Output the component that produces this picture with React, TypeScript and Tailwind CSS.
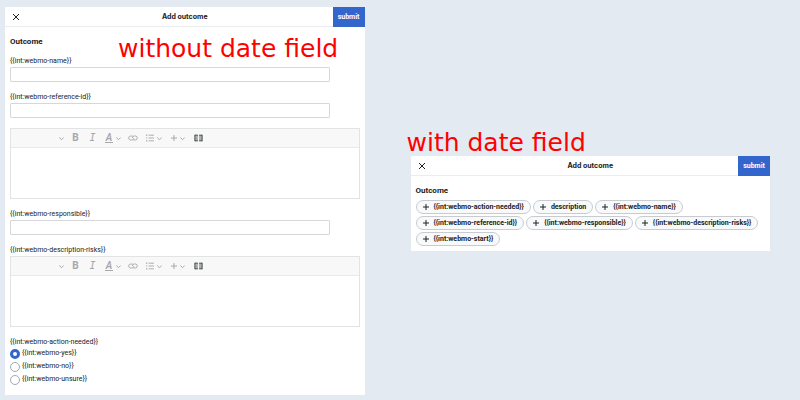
import React from "react";

function Chevron() {
  return (
    <svg viewBox="0 0 5 5" className="h-[5px] w-[5px] shrink-0" fill="none" stroke="currentColor" strokeWidth="1">
      <path d="M0.3 1.5 2.5 3.7 4.7 1.5" />
    </svg>
  );
}

function Plus() {
  return (
    <svg viewBox="0 0 8 8" className="h-2 w-2 shrink-0" fill="none" stroke="currentColor" strokeWidth="1">
      <path d="M4 1v6M1 4h6" />
    </svg>
  );
}

function LinkIcon() {
  return (
    <svg viewBox="0 0 10 8" className="h-2 w-[10px]" fill="none" stroke="currentColor" strokeWidth="0.9">
      <path d="M4.6 2H2.7a2 2 0 0 0 0 4h1.1a2 2 0 0 0 2-2" />
      <path d="M5.4 6h1.9a2 2 0 0 0 0-4H6.2a2 2 0 0 0-2 2" />
    </svg>
  );
}

function ListIcon() {
  return (
    <svg viewBox="0 0 8 8" className="h-2 w-2" fill="none" stroke="currentColor" strokeWidth="0.9">
      <path d="M2.6 1.2H8M2.6 4H8M2.6 6.8H8" />
      <path d="M0 1.2h1.3M0 4h1.3M0 6.8h1.3" strokeWidth="1.2" />
    </svg>
  );
}

function TemplateIcon() {
  return (
    <svg viewBox="0 0 9 8" className="h-2 w-[9px]" fill="none" stroke="currentColor">
      <path d="M1 0.8v6.4M8 0.8v6.4" strokeWidth="1.2" />
      <path d="M3 0.8v6.4M6 0.8v6.4" strokeWidth="0.8" />
      <path d="M1 1.2h2.9M5.1 1.2H8M1 6.8h2.9M5.1 6.8H8" strokeWidth="0.8" />
    </svg>
  );
}

function Panel({ children }: { children: React.ReactNode }) {
  return (
    <section className="bg-white text-[#202122]">
      <header className="flex h-5 items-stretch border-b border-[#eaecf0]">
        <div className="flex w-8 items-center pl-[7px]">
          <button type="button" aria-label="Close">
            <svg viewBox="0 0 8 8" className="h-2 w-2" fill="none" stroke="currentColor" strokeWidth="1">
              <path d="M1 1l6 6M7 1L1 7" />
            </svg>
          </button>
        </div>
        <h2 className="flex-1 self-center text-center font-['Inter',sans-serif] text-[7px] leading-[11px] font-bold">Add outcome</h2>
        <button type="submit" className="-mb-px w-8 bg-[#3366cc] text-[7px] leading-[11px] font-bold text-white">
          submit
        </button>
      </header>
      <div className="px-[5px] pt-2">
        <h3 className="text-[8px] leading-[13px] font-bold">Outcome</h3>
        {children}
      </div>
    </section>
  );
}

function TextField({ id, label }: { id: string; label: string }) {
  return (
    <div>
      <label htmlFor={id} className="block">{label}</label>
      <input id={id} type="text" className="block h-[15px] w-[320px] max-w-full rounded-[1px] border border-[#d5d7da] bg-white px-1" />
    </div>
  );
}

function Editor({ id, name }: { id: string; name: string }) {
  return (
    <div className="border border-[#e2e3e5]">
      <div role="toolbar" aria-label={name} className="flex h-[19px] items-stretch border-b border-[#e8e9eb] bg-[#f8f8f8] text-[#a6a7a9]">
        <button type="button" aria-label="Paragraph format" className="flex w-14 items-center justify-end pr-[3px]"><Chevron /></button>
        <button type="button" aria-label="Bold" className="w-[17px] text-[10px] leading-[18px] font-bold">B</button>
        <button type="button" aria-label="Italic" className="w-[17px] font-['DejaVu_Sans_Mono',monospace] text-[10px] leading-[18px] italic">I</button>
        <button type="button" aria-label="Text style" className="flex w-6 items-center gap-[3px] pl-1">
          <span className="w-2 border-b border-current text-center text-[10px] leading-[8px] font-semibold italic">A</span>
          <Chevron />
        </button>
        <button type="button" aria-label="Link" className="flex w-4 items-center justify-center"><LinkIcon /></button>
        <button type="button" aria-label="List" className="flex w-[25px] items-center gap-[3px] pl-[5px]"><ListIcon /><Chevron /></button>
        <button type="button" aria-label="Insert" className="flex w-6 items-center gap-[2px] pl-1"><Plus /><Chevron /></button>
        <button type="button" aria-label="Template" className="flex w-4 items-center justify-center text-[#404244]"><TemplateIcon /></button>
      </div>
      <textarea id={id} aria-label={name} className="block h-[50px] w-full resize-none bg-white p-1 text-[7px] leading-[11px]" />
    </div>
  );
}

function Choice({ value, label, checked }: { value: string; label: string; checked?: boolean }) {
  return (
    <label className="flex h-[11px] items-center gap-[2px]">
      <input
        type="radio"
        name="action-needed"
        value={value}
        defaultChecked={checked}
        className="h-[10px] w-[10px] shrink-0 appearance-none rounded-full border border-[#a2a9b1] bg-white checked:border-[3px] checked:border-[#3366cc]"
      />
      {label}
    </label>
  );
}

const chips = [
  "{{int:webmo-action-needed}}",
  "description",
  "{{int:webmo-name}}",
  "{{int:webmo-reference-id}}",
  "{{int:webmo-responsible}}",
  "{{int:webmo-description-risks}}",
  "{{int:webmo-start}}",
];

export default function App() {
  return (
    <main className="flex min-h-screen items-start gap-[46px] bg-[#e3eaf2] pr-[30px] pl-[5px] font-['Roboto','Liberation_Sans',sans-serif]">
      <div className="relative min-w-0 flex-1 pt-[7px]">
        <Panel>
          <form className="flex flex-col gap-[10px] pt-2 pb-[10px] text-[7px] leading-[11px]">
            <TextField id="name" label="{{int:webmo-name}}" />
            <TextField id="reference-id" label="{{int:webmo-reference-id}}" />
            <Editor id="description" name="Description" />
            <TextField id="responsible" label="{{int:webmo-responsible}}" />
            <div>
              <label htmlFor="risks" className="block">{"{{int:webmo-description-risks}}"}</label>
              <Editor id="risks" name="Description risks" />
            </div>
            <fieldset>
              <legend>{"{{int:webmo-action-needed}}"}</legend>
              <div className="flex flex-col gap-[2px]">
                <Choice value="yes" label="{{int:webmo-yes}}" checked />
                <Choice value="no" label="{{int:webmo-no}}" />
                <Choice value="unsure" label="{{int:webmo-unsure}}" />
              </div>
            </fieldset>
          </form>
        </Panel>
        <p className="absolute top-[33px] left-[113px] font-['DejaVu_Sans',sans-serif] text-[25px] leading-[32px] whitespace-nowrap text-[#ff0000]">
          without date field
        </p>
      </div>
      <div className="min-w-0 flex-1 pt-[130px]">
        <p className="-ml-1 font-['DejaVu_Sans',sans-serif] text-[25px] leading-[26px] whitespace-nowrap text-[#ff0000]">
          with date field
        </p>
        <Panel>
          <div className="flex flex-wrap gap-[2px] pt-[3px] pb-[5px]">
            {chips.map((chip) => (
              <button
                key={chip}
                type="button"
                className="flex h-[14px] items-center gap-1 rounded-full border border-[#c8ccd1] bg-[#f8f9fa] pr-[6px] pl-[5px] text-[7px] leading-[11px] font-bold"
              >
                <Plus />
                {chip}
              </button>
            ))}
          </div>
        </Panel>
      </div>
    </main>
  );
}
